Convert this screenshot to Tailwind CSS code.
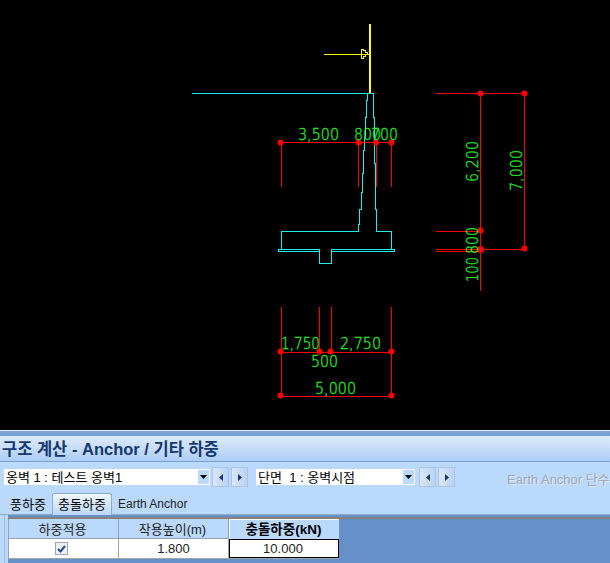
<!DOCTYPE html>
<html lang="ko">
<head>
  <meta charset="UTF-8" />
  <title>구조 계산 - Anchor / 기타 하중</title>
  <script src="https://cdn.jsdelivr.net/npm/@tailwindcss/browser@4"></script>
</head>
<body class="w-[610px] h-[563px] overflow-hidden bg-black font-['Liberation_Sans','Noto_Sans_CJK_KR',sans-serif]">

  <!-- Drawing canvas -->
  <svg class="block w-[610px] h-[430px] bg-black" viewBox="0 0 610 430" shape-rendering="crispEdges">
    <!-- wall section -->
    <g fill="none" stroke="#22eeee" stroke-width="1">
      <path d="M192 93.500H373.500" />
      <path d="M367.500 93V100H366.500V117H365.500V137H364.500V150H363.500V173H362.500V192H361.500V209H359.500V224H358.500V231.500H281.500V249.500" />
      <path d="M373.500 93V117H374.500V163H375.500V209H376.500V231.500H391.500V249.500" />
      <path d="M278.500 251.500V249.500H319.500V263.500H331.500V249.500H394.500V251.500" />
      <path d="M278 251.500H319.500M331.500 251.500H394.500" />
    </g>
    <!-- load arrow -->
    <g fill="none" stroke="#ffff00">
      <path d="M370 24V93" stroke-width="2" />
      <path d="M324 54.500H370" />
      <path d="M361.500 49V59M361.500 49.500H363.500V50.500H365.500V52.500H367.500V54.500H365.500V56.500H363.500V58.500H361.500" />
    </g>
    <!-- dimension lines -->
    <g fill="none" stroke="#ff0000">
      <path d="M280 142.500H391" stroke-width="1" />
      <path d="M281.500 142V187M358.500 142V187M376.500 142V187M391.500 142V187" />
      <path d="M281.500 307V396M319.500 307V352M331.500 307V352M391.500 307V396" />
      <path d="M280 352.500H391M280 396.500H391" />
      <path d="M436 93.500H524M436 231.500H480M436 249.500H524M436 251.500H480" />
      <path d="M480.500 93V291M524.500 93V248" />
    </g>
    <g fill="#ff0000" shape-rendering="auto">
      <circle cx="280.500" cy="142.500" r="3" />
      <circle cx="358.500" cy="142.500" r="3" />
      <circle cx="376" cy="142.500" r="3" />
      <circle cx="391.500" cy="142.500" r="3" />
      <circle cx="280.500" cy="351.500" r="3" />
      <circle cx="319.500" cy="351.500" r="3" />
      <circle cx="330.500" cy="351.500" r="3" />
      <circle cx="391.500" cy="351.500" r="3" />
      <circle cx="280.500" cy="395.500" r="3" />
      <circle cx="391.500" cy="395.500" r="3" />
      <circle cx="480.500" cy="93.500" r="3" />
      <circle cx="524.500" cy="93.500" r="3" />
      <circle cx="480.500" cy="230.500" r="3" />
      <circle cx="480.500" cy="249.500" r="3.500" />
      <circle cx="524.500" cy="248.500" r="3" />
    </g>
    <!-- dimension text -->
    <g fill="#22ff22" stroke="#22ee22" stroke-width="0.3" font-size="15" class="font-['DejaVu_Sans'] font-extralight" shape-rendering="auto">
      <text x="298" y="140" textLength="41" lengthAdjust="spacingAndGlyphs">3,500</text>
      <text x="354" y="140" textLength="27" lengthAdjust="spacingAndGlyphs">800</text>
      <text x="371" y="140" textLength="27" lengthAdjust="spacingAndGlyphs">700</text>
      <text x="281" y="349" textLength="39" lengthAdjust="spacingAndGlyphs">1,750</text>
      <text x="340" y="349" textLength="41" lengthAdjust="spacingAndGlyphs">2,750</text>
      <text x="311" y="367" textLength="27" lengthAdjust="spacingAndGlyphs">500</text>
      <text x="315" y="394" textLength="41" lengthAdjust="spacingAndGlyphs">5,000</text>
      <text transform="translate(478 182) rotate(-90)" textLength="41" lengthAdjust="spacingAndGlyphs">6,200</text>
      <text transform="translate(522 191) rotate(-90)" textLength="41" lengthAdjust="spacingAndGlyphs">7,000</text>
      <text transform="translate(478 254) rotate(-90)" textLength="27" lengthAdjust="spacingAndGlyphs">800</text>
      <text transform="translate(478 282) rotate(-90)" textLength="25" lengthAdjust="spacingAndGlyphs">100</text>
    </g>
  </svg>

  <!-- Bottom panel -->
  <div class="h-[133px] flex flex-col bg-[#bbd8fd]">
    <div class="h-px bg-[#e8f0fb]"></div>
    <div class="h-[5px] bg-[#7ba1d3]"></div>

    <!-- title bar -->
    <div class="h-[26px] flex items-center pl-[2px] pt-px bg-gradient-to-b from-[#dfebfc] to-[#aecdf6] border-b border-[#7da2d2] text-[16.500px] font-bold text-[#15396e] whitespace-pre">구조 계산 - Anchor / 기타 하중</div>

    <!-- selectors -->
    <div class="h-[53px] flex items-start pt-[5px] text-[13px] text-black relative">
      <div class="ml-[4px] w-[206px] h-[16px] mt-[2px] bg-white border border-white flex items-center justify-between">
        <span class="pl-[1px] pt-px whitespace-pre">옹벽 1 : 테스트 옹벽1</span>
        <span class="w-[11px] h-[14px] bg-[#bbd8fd] flex items-center justify-center">
          <svg width="7" height="4" viewBox="0 0 7 4"><path d="M0 0H7L3.500 4Z" fill="#000" /></svg>
        </span>
      </div>
      <div class="ml-[2px] flex gap-[2px]">
        <button class="w-[17px] h-[20px] flex items-center justify-center bg-gradient-to-r from-[#dbe6f5] to-[#b9d2f3] border border-[#a9c4e8]">
          <svg width="4" height="7" viewBox="0 0 4 7"><path d="M4 0V7L0 3.500Z" fill="#15396e" /></svg>
        </button>
        <button class="w-[17px] h-[20px] flex items-center justify-center bg-gradient-to-r from-[#dbe6f5] to-[#b9d2f3] border border-[#a9c4e8]">
          <svg width="4" height="7" viewBox="0 0 4 7"><path d="M0 0V7L4 3.500Z" fill="#15396e" /></svg>
        </button>
      </div>
      <div class="ml-[8px] w-[159px] h-[16px] mt-[2px] bg-white border border-white flex items-center justify-between">
        <span class="pl-[1px] pt-px whitespace-pre">단면  1 : 옹벽시점</span>
        <span class="w-[11px] h-[14px] bg-[#bbd8fd] flex items-center justify-center">
          <svg width="7" height="4" viewBox="0 0 7 4"><path d="M0 0H7L3.500 4Z" fill="#000" /></svg>
        </span>
      </div>
      <div class="ml-[4px] flex gap-[2px]">
        <button class="w-[17px] h-[20px] flex items-center justify-center bg-gradient-to-r from-[#dbe6f5] to-[#b9d2f3] border border-[#a9c4e8]">
          <svg width="4" height="7" viewBox="0 0 4 7"><path d="M4 0V7L0 3.500Z" fill="#15396e" /></svg>
        </button>
        <button class="w-[17px] h-[20px] flex items-center justify-center bg-gradient-to-r from-[#dbe6f5] to-[#b9d2f3] border border-[#a9c4e8]">
          <svg width="4" height="7" viewBox="0 0 4 7"><path d="M0 0V7L4 3.500Z" fill="#15396e" /></svg>
        </button>
      </div>
      <span class="ml-[52px] mt-[3px] whitespace-nowrap text-[#a0a8b4] [text-shadow:1px_1px_0_#dfeafa]">Earth Anchor 단수</span>

      <!-- tabs -->
      <div class="absolute left-0 right-0 bottom-0 h-[22px] flex items-end border-b border-[#8fabd0] text-[13px]">
        <span class="ml-[10px] w-[36px] h-[20px] text-center leading-[21px] whitespace-nowrap">풍하중</span>
        <span class="ml-[6px] w-[60px] h-[22px] -mb-px text-center leading-[22px] bg-gradient-to-b from-[#f0f6fe] to-[#bbd8fd] border border-b-0 border-[#8fabd0] rounded-t-[3px] whitespace-nowrap">충돌하중</span>
        <span class="ml-[6px] h-[20px] leading-[21px] text-[12px] text-[#222]">Earth Anchor</span>
      </div>
    </div>

    <!-- grid area -->
    <div class="flex-1 ml-[4px] pl-[3px] pt-[3px] bg-[#6590c8] border-l border-[#9fbde6] relative">
      <div class="absolute left-0 top-0 w-[3px] h-full bg-[#bbd8fd]"></div>
      <div class="absolute left-[3px] right-0 top-[2px] h-[2px] bg-[#87827c]"></div>
      <div class="relative mt-[1px] w-[331px] pb-px grid grid-cols-[110px_110px_110px] border-l border-[#a0a4a8] text-[13px] text-[#222] bg-[#a0a4a8]">
        <div class="h-[20px] pt-[2px] pr-[2px] flex items-center justify-center bg-[#bbd8fd] border-r border-b border-[#8f9fb8]">하중적용</div>
        <div class="h-[20px] pt-[2px] pr-[2px] flex items-center justify-center bg-[#bbd8fd] border-r border-b border-[#8f9fb8]">작용높이(m)</div>
        <div class="h-[20px] pt-[2px] pr-[2px] flex items-center justify-center bg-[#bbd8fd] border-t border-l border-white text-[13.500px] font-bold text-black whitespace-nowrap">충돌하중(kN)</div>
        <div class="h-[19px] pr-[4px] flex items-center justify-center bg-white border-r border-[#a0a4a8]">
          <span class="w-[13px] h-[13px] flex items-center justify-center bg-[#eef0f8] border border-[#9aa4c0]">
            <svg width="9" height="8" viewBox="0 0 9 8"><path d="M1 4L3.500 6.500L8 1" fill="none" stroke="#2a4a8c" stroke-width="2" /></svg>
          </span>
        </div>
        <div class="h-[19px] pt-px flex items-center justify-center bg-white border-r border-[#a0a4a8]">1.800</div>
        <div class="h-[19px] pt-px pr-[2px] flex items-center justify-center bg-white border border-black">10.000</div>
      </div>
    </div>
  </div>

</body>
</html>
